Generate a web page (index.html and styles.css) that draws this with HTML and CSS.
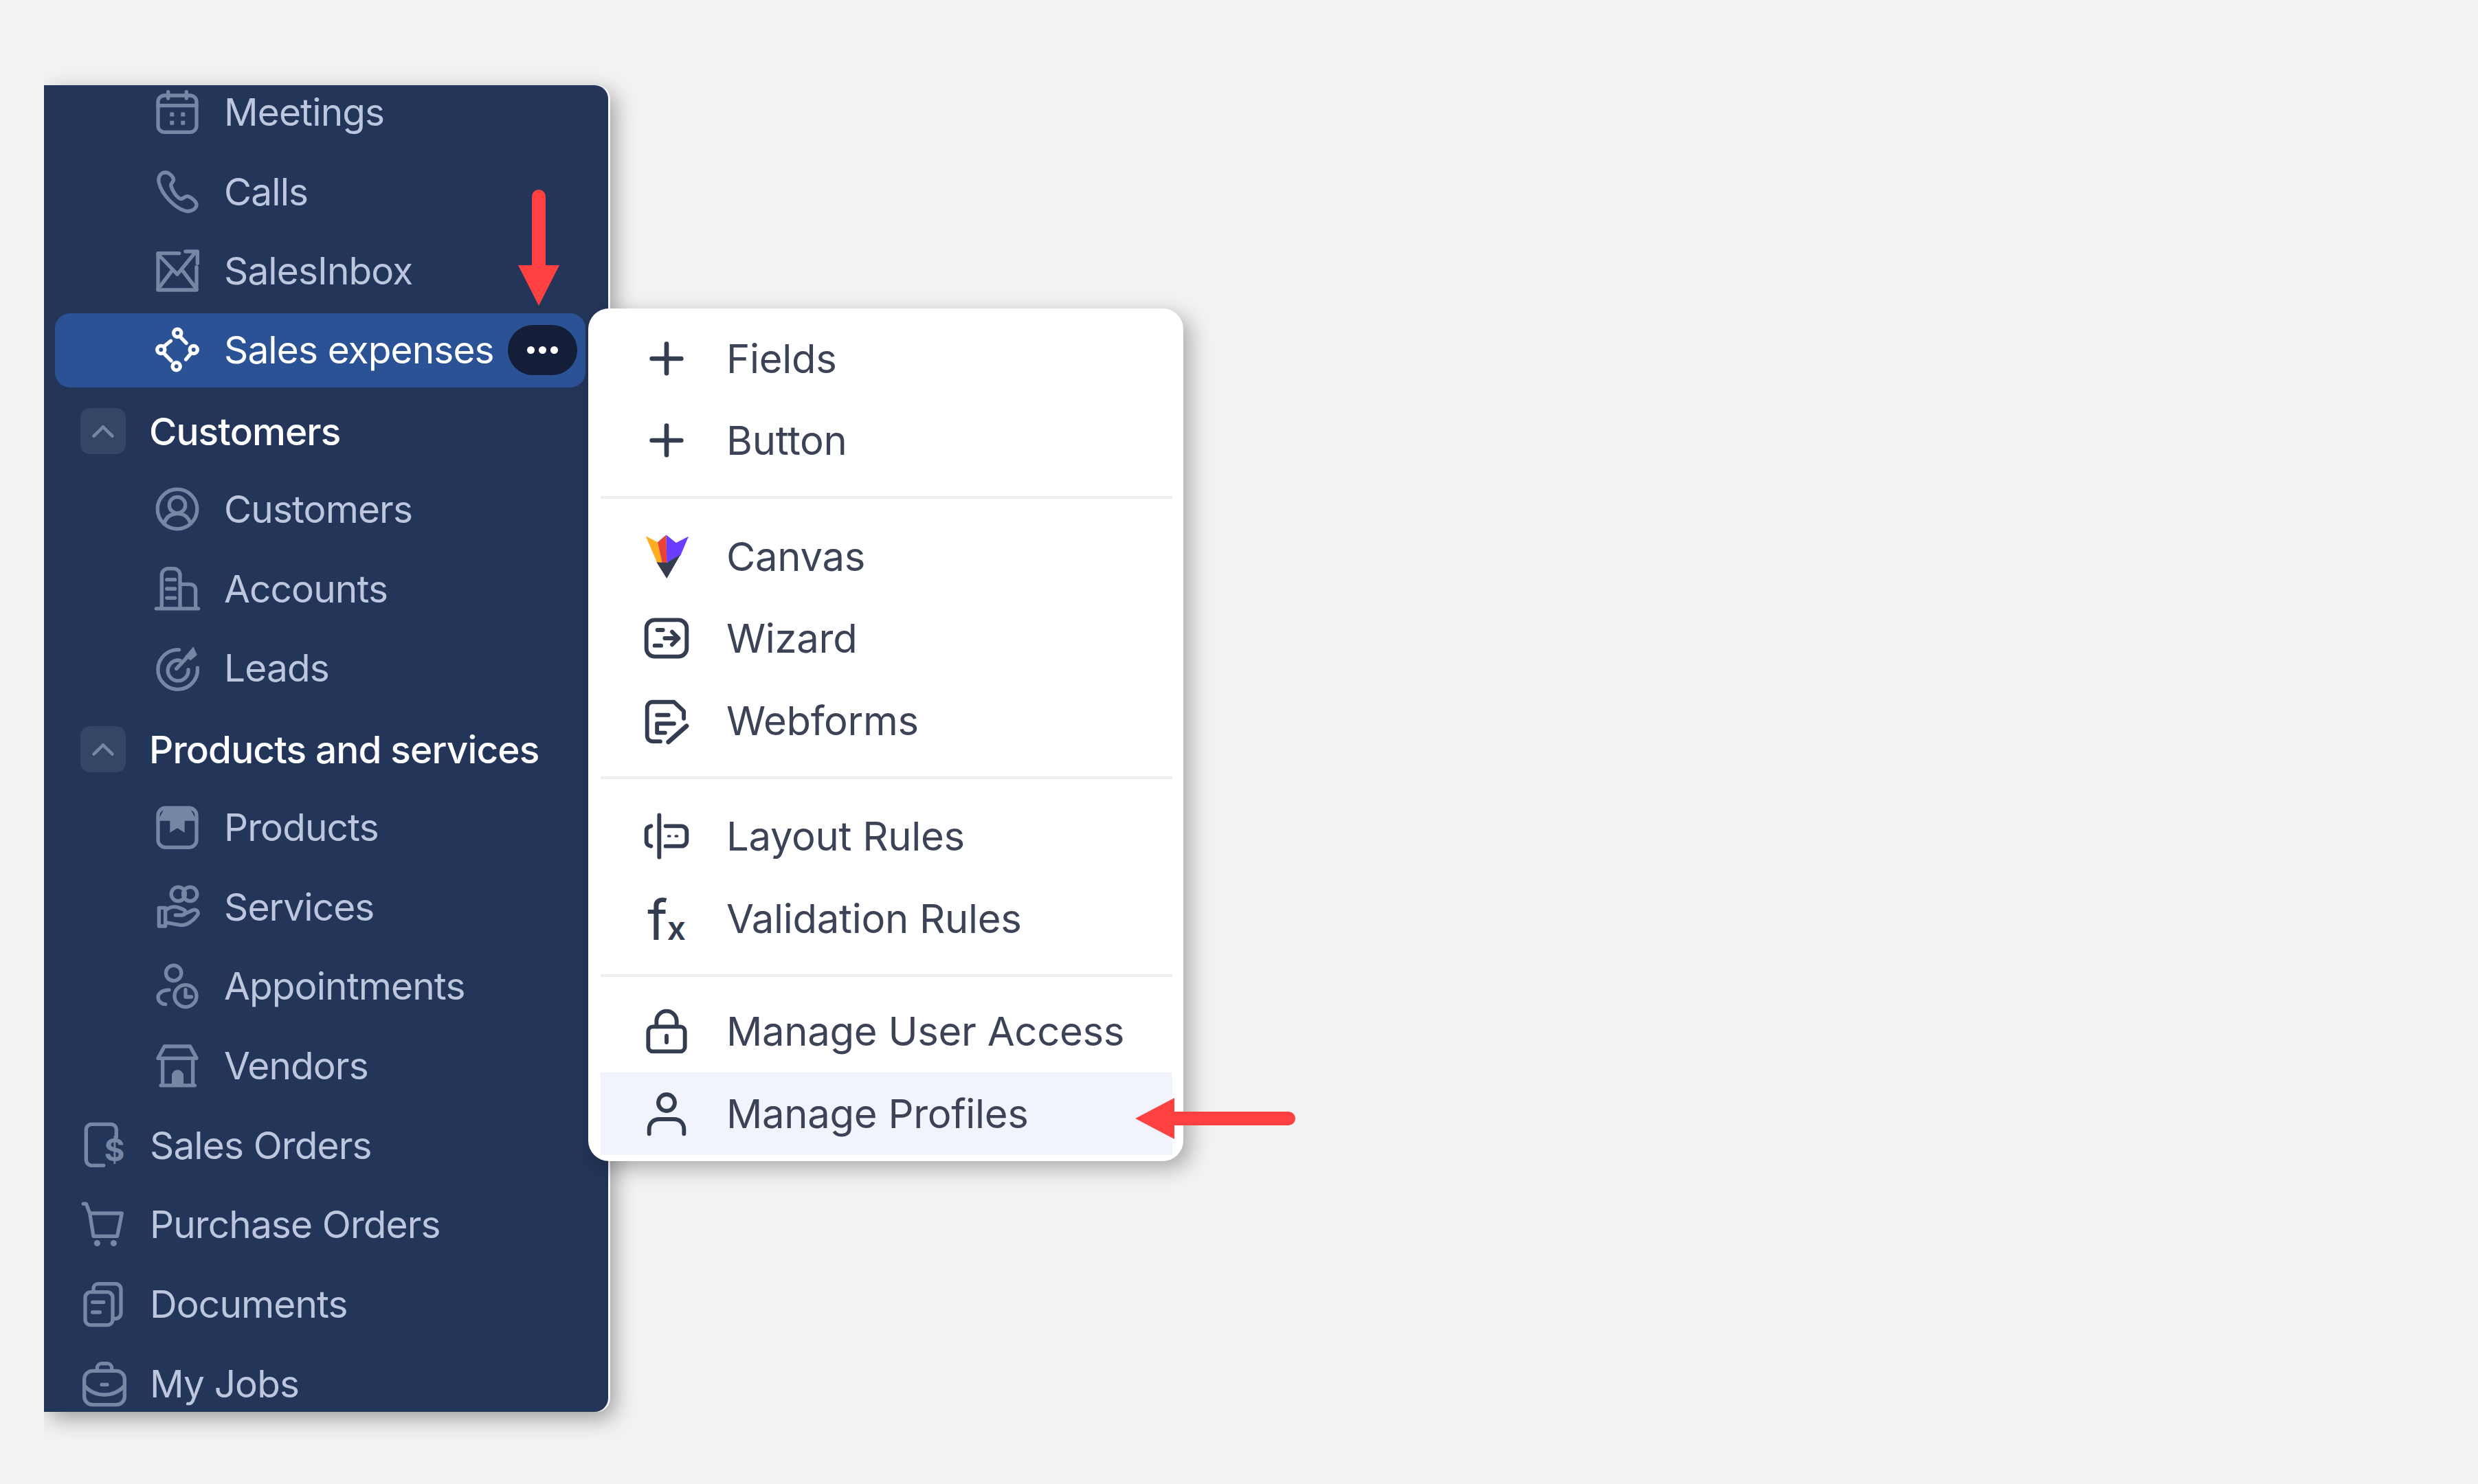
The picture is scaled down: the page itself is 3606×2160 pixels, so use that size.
FILE: index.html
```html
<!DOCTYPE html>
<html lang="en">
<head>
  <meta charset="UTF-8" />
  <title>Sales expenses menu</title>
  <link rel="stylesheet" href="styles.css">
</head>
<body>

<nav class="sidebar">
  <ul class="nav-list">
    <li class="nav-item sub">
      <svg class="icon" viewBox="0 0 24 24"><rect x="1.500" y="3" width="21" height="20" rx="3.500"/><path d="M1.500 8.500h21M7 1v3.500M17 1v3.500"/><path class="dots" d="M8 12.200h2.200v2.200H8zM14 12.200h2.200v2.200H14zM8 16.800h2.200v2.200H8zM14 16.800h2.200v2.200H14z"/></svg>
      <span>Meetings</span>
    </li>
    <li class="nav-item sub">
      <svg class="icon" viewBox="0 0 24 24"><path d="M5.500 1.500C3 1.500 1.200 4 2 7.200c1.500 6 8 13.500 14.500 15.300 3 .8 6-1.300 6-3.500 0-1.500-2.800-4-4.800-4.500-1.500-.3-2.500 1.500-3.700 1.500-2.600-.8-5-5.200-5.500-7.500 0-1.100 1.500-2 1.500-3 0-1.600-2.500-4-4.500-4z"/></svg>
      <span>Calls</span>
    </li>
    <li class="nav-item sub">
      <svg class="icon" viewBox="0 0 24 24"><path d="M13 2.500H1.500v20h21V10"/><path d="M1.500 3L12 14l9-11M1.500 22l8-10.500M22.500 22l-8-10.500M16.500 1.500h6.500V8"/></svg>
      <span>SalesInbox</span>
    </li>
    <li class="nav-item sub active">
      <svg class="icon" viewBox="0 0 24 24"><circle cx="12.100" cy="2.900" r="2.100"/><circle cx="3.100" cy="12" r="2.100"/><circle cx="20.900" cy="12" r="2.100"/><circle cx="11.500" cy="21.100" r="2.100"/><path d="M13.500 4.800l3.400 3.600M4.700 10.200l3.700-3M19.500 14l-2.800 3.300M4.700 14l3.900 4"/></svg>
      <span>Sales expenses</span>
      <button class="more"><i></i><i></i><i></i></button>
    </li>

    <li class="nav-item head">
      <span class="chevron"><svg viewBox="0 0 24 24"><path d="M5 15.500l7-7 7 7"/></svg></span>
      <span>Customers</span>
    </li>
    <li class="nav-item sub">
      <svg class="icon" viewBox="0 0 24 24"><circle cx="12" cy="12" r="10.800"/><circle cx="12" cy="9.800" r="4.400"/><path d="M4.800 20c1-3.500 3.500-5.500 7.200-5.500s6.200 2 7.200 5.500"/></svg>
      <span>Customers</span>
    </li>
    <li class="nav-item sub">
      <svg class="icon" viewBox="0 0 24 24"><path d="M.5 22.800h23M3.500 22.800V4.500a3.500 3.500 0 0 1 3.500-3.500h3a3.500 3.500 0 0 1 3.500 3.500v18.300M13.500 9.500h5.500a3 3 0 0 1 3 3v10.300M6.300 7h4.400M6.300 12h4.400M6.300 17h4.400"/></svg>
      <span>Accounts</span>
    </li>
    <li class="nav-item sub">
      <svg class="icon" viewBox="0 0 24 24"><path d="M13 2.200a10.800 10.800 0 1 0 10 9.800"/><path d="M13.500 8a5.600 5.600 0 1 0 4.500 5"/><path d="M11.500 12.500l7-7.500"/><path class="dots" d="M20.800 .5l2 4.500-3.500 3-3.300-2z"/></svg>
      <span>Leads</span>
    </li>

    <li class="nav-item head">
      <span class="chevron"><svg viewBox="0 0 24 24"><path d="M5 15.500l7-7 7 7"/></svg></span>
      <span>Products and services</span>
    </li>
    <li class="nav-item sub">
      <svg class="icon" viewBox="0 0 24 24"><rect x="1.500" y="1.500" width="21" height="21.500" rx="4"/><path d="M1.500 7.500h21"/><path class="dots" d="M8 7.500h8v7.500l-4-2.500-4 2.500zM5 1.500h14l3 6H2z"/></svg>
      <span>Products</span>
    </li>
    <li class="nav-item sub">
      <svg class="icon" viewBox="0 0 24 24"><circle cx="12.500" cy="5" r="3.800"/><circle cx="19" cy="5" r="3.800"/><path d="M2 12.500h3.500v10H2zM5.500 14c2.500-2.300 5-2.500 7.500-1.500l2.500 1c1.500.6 1 3-1 3H11"/><path d="M15.500 16l5-2.200c2-.8 3.500 1 2.500 2.600-2 3-5.500 5.600-9 5.600l-8.500-1.500"/></svg>
      <span>Services</span>
    </li>
    <li class="nav-item sub">
      <svg class="icon" viewBox="0 0 24 24"><circle cx="10" cy="5" r="4.200"/><path d="M7.500 14.200c-3.500 0-6 1.800-6 4s2 3.800 4 3.800"/><circle cx="16.500" cy="17.500" r="6"/><path d="M16.500 14v4h3.200"/></svg>
      <span>Appointments</span>
    </li>
    <li class="nav-item sub">
      <svg class="icon" viewBox="0 0 24 24"><path d="M5 1.500h14l3.500 6.500h-21zM4 8v14.800M20.500 8v14.800M3 22.800h18.500"/><path class="dots" d="M9 22.500v-5a3.200 3.200 0 0 1 6.400 0v5z"/></svg>
      <span>Vendors</span>
    </li>

    <li class="nav-item top">
      <svg class="icon" viewBox="0 0 24 24"><path d="M18.500 7.500V3.500a3 3 0 0 0-3-3H5a3 3 0 0 0-3 3V20a3 3 0 0 0 3 3h6.500"/><text class="glyph" x="17.500" y="20.500">$</text></svg>
      <span>Sales Orders</span>
    </li>
    <li class="nav-item top">
      <svg class="icon" viewBox="0 0 24 24"><path d="M.5 .8h1.500L4 6l2 12.500h13L21.500 6H4"/><circle class="dots" cx="8" cy="22.300" r="1.700"/><circle class="dots" cx="17" cy="22.300" r="1.700"/></svg>
      <span>Purchase Orders</span>
    </li>
    <li class="nav-item top">
      <svg class="icon" viewBox="0 0 24 24"><rect x="1.500" y="5.500" width="15" height="18" rx="3"/><path d="M6 5V3.500a2.500 2.500 0 0 1 2.500-2.500h9.500a3 3 0 0 1 3 3v13a3 3 0 0 1-3 3h-1.500M5.500 11h6M5.500 16.500h4"/></svg>
      <span>Documents</span>
    </li>
    <li class="nav-item top">
      <svg class="icon" viewBox="0 0 24 24"><path d="M8 5V3.500A2.500 2.500 0 0 1 10.500 1h3A2.500 2.500 0 0 1 16 3.500V5"/><rect x="1" y="5" width="22" height="18.500" rx="4.500"/><path d="M1 13c3 3.500 7 5 11 5s8-1.500 11-5M10.500 12.500h3"/></svg>
      <span>My Jobs</span>
    </li>
  </ul>
</nav>

<div class="popup">
  <div class="group">
    <div class="menu-item">
      <svg class="icon" viewBox="0 0 24 24"><path class="plus" d="M12 4v16M4 12h16"/></svg>
      <span>Fields</span>
    </div>
    <div class="menu-item">
      <svg class="icon" viewBox="0 0 24 24"><path class="plus" d="M12 4v16M4 12h16"/></svg>
      <span>Button</span>
    </div>
  </div>
  <div class="group">
    <div class="menu-item">
      <svg class="icon logo" viewBox="0 0 24 24">
        <path fill="#ffad21" d="M.6 .8l6.500 3.400 2.600 11.100H6.800z"/>
        <path fill="#ea4335" d="M7.100 4.200L11.800 .2l.3 15.200H9.600z"/>
        <path fill="#6a3dff" d="M11.800 .2l5.400 4.300L24 1l-4.400 10.400-7.500 4z"/>
        <path fill="#343c50" d="M6.500 15.100l5.600.3 7.500-4.400L12.100 24z"/>
      </svg>
      <span>Canvas</span>
    </div>
    <div class="menu-item">
      <svg class="icon" viewBox="0 0 24 24"><rect x="1" y="2" width="22" height="20" rx="4.500"/><path d="M7 7.500h3M5.500 16h3.500M11 12h7.500M15 8.500l3.500 3.500-3.500 3.500"/></svg>
      <span>Wizard</span>
    </div>
    <div class="menu-item">
      <svg class="icon" viewBox="0 0 24 24"><path d="M8.600 23.300H4.400a3 3 0 0 1-3-3V4.800a3 3 0 0 1 3-3h11.700l5.300 5v4M6.800 8.900H13M16.100 13.600H6.800v5h4.400"/><path class="plus" d="M13 23.600l9.900-8.700"/></svg>
      <span>Webforms</span>
    </div>
  </div>
  <div class="group">
    <div class="menu-item">
      <svg class="icon" viewBox="0 0 24 24"><path d="M8 .5v23M3.500 6.500C2 6.800 1 7.500 1 9v6c0 1.500 1 2.200 2.500 2.500M11.500 6.500H20a3 3 0 0 1 3 3v5a3 3 0 0 1-3 3h-8.500"/><path class="thin" d="M13 12h.8M17 12h.8"/></svg>
      <span>Layout Rules</span>
    </div>
    <div class="menu-item">
      <svg class="icon" viewBox="0 0 24 24"><text class="fx" x="1.500" y="23.600">f</text><text class="fx small" x="12.300" y="23.600">x</text></svg>
      <span>Validation Rules</span>
    </div>
  </div>
  <div class="group last">
    <div class="menu-item">
      <svg class="icon" viewBox="0 0 24 24"><rect x="2" y="9.500" width="20" height="13.500" rx="2.500"/><path d="M6.500 9.500V6.500a5.500 5.500 0 0 1 11 0v3M12 14.500v3.500"/></svg>
      <span>Manage User Access</span>
    </div>
    <div class="menu-item hover">
      <svg class="icon" viewBox="0 0 24 24"><circle cx="12" cy="6" r="4.500"/><path d="M2.500 23v-2.500c0-3.500 2.500-5.500 5.500-5.500h8c3 0 5.500 2 5.500 5.500V23"/></svg>
      <span>Manage Profiles</span>
    </div>
  </div>
</div>

<!-- red callout arrows -->
<div class="arrow down"></div>
<div class="arrow left"></div>

</body>
</html>
```

FILE: styles.css
```css
* { box-sizing: border-box; }

body {
  margin: 0;
  height: 2160px;
  padding: 124px 0 0 64px;
  position: relative;
  overflow: hidden;
  background: #f2f2f2;
  font-family: 'Inter', 'Liberation Sans', sans-serif;
}

.sidebar {
  width: 821px;
  height: 1931px;
  overflow: hidden;
  background: #233559;
  border-radius: 0 20px 20px 0;
  box-shadow: 3px 0 0 #f9f9f9, 10px 10px 30px rgba(0, 0, 0, 0.34);
  clip-path: inset(-60px -60px -60px 0);
}

.nav-list {
  list-style: none;
  margin: -19px 0 0;
  padding: 0;
}

.nav-item {
  height: 115.7px;
  display: flex;
  align-items: center;
  white-space: nowrap;
  font-size: 55px;
  letter-spacing: -0.9px;
  color: #bcc7de;
}

.icon {
  width: 64px;
  height: 64px;
  flex: none;
  fill: none;
  stroke: currentColor;
  stroke-width: 2;
  stroke-linecap: round;
  stroke-linejoin: round;
  overflow: visible;
}

.nav-item .icon {
  color: #7687a6;
}

.icon .dots {
  fill: currentColor;
  stroke: none;
}

.icon .glyph {
  fill: currentColor;
  stroke: none;
  font-family: 'Inter', sans-serif;
  font-size: 17px;
  font-weight: 700;
  letter-spacing: 0;
  text-anchor: middle;
}

.nav-item.sub {
  padding-left: 162px;
  gap: 36px;
}

.nav-item.top {
  padding-left: 56px;
  gap: 34px;
}

.nav-item.head {
  padding: 5px 0 0 53px;
  gap: 34px;
  color: #fff;
  font-weight: 500;
}

.nav-item.active {
  width: 772px;
  margin-left: 16px;
  height: 108px;
  margin-top: 4px;
  margin-bottom: 3.5px;
  padding-left: 146px;
  padding-bottom: 2px;
  background: #2a5295;
  border-radius: 22px;
  color: #fff;
}

.nav-item.active .icon {
  color: #fff;
}

.more {
  flex: none;
  margin-left: -16px;
  width: 101px;
  height: 73px;
  display: flex;
  align-items: center;
  justify-content: center;
  gap: 6px;
  padding: 0;
  border: none;
  border-radius: 37px;
  background: #141e38;
}

.more i {
  width: 11px;
  height: 11px;
  border-radius: 50%;
  background: #fff;
}

.chevron {
  width: 66px;
  height: 67px;
  flex: none;
  display: flex;
  align-items: center;
  justify-content: center;
  border-radius: 14px;
  background: #344666;
}

.chevron svg {
  width: 46px;
  height: 46px;
  fill: none;
  stroke: #7687a6;
  stroke-width: 2.4;
  stroke-linecap: round;
  stroke-linejoin: round;
}

.popup {
  position: absolute;
  top: 449px;
  left: 856px;
  width: 866px;
  height: 1241px;
  padding: 13px 16px 8px 18px;
  background: #fff;
  border-radius: 30px;
  box-shadow: 10px 10px 30px rgba(0, 0, 0, 0.3);
}

.group {
  padding-bottom: 21px;
  margin-bottom: 24px;
  border-bottom: 4px solid #eeeeee;
}

.group.last {
  padding-bottom: 0;
  margin-bottom: 0;
  margin-top: -4px;
  border-bottom: none;
}

.menu-item {
  height: 119.5px;
  display: flex;
  align-items: center;
  gap: 55px;
  padding-left: 64px;
  font-size: 58px;
  letter-spacing: -0.3px;
  color: #3c4356;
}

.menu-item .icon {
  color: #343c50;
  stroke-width: 2.2;
}

.menu-item .icon.logo {
  stroke: none;
}

.menu-item .icon .plus {
  stroke-width: 2.5;
}

.menu-item .icon .thin {
  stroke-width: 1.4;
}

.menu-item .icon .fx {
  fill: currentColor;
  stroke: none;
  font-family: 'Inter', sans-serif;
  font-size: 30px;
  font-weight: 400;
  letter-spacing: 0;
}

.menu-item .icon .fx.small {
  font-size: 18px;
  font-weight: 600;
}

.menu-item.hover {
  background: #f1f4fd;
}

.arrow {
  position: absolute;
  background: #ff4040;
  border-radius: 10px;
}

.arrow::after {
  content: "";
  position: absolute;
  width: 0;
  height: 0;
}

.arrow.down {
  left: 774px;
  top: 276px;
  width: 20px;
  height: 120px;
}

.arrow.down::after {
  left: -20px;
  top: 110px;
  border-left: 30px solid transparent;
  border-right: 30px solid transparent;
  border-top: 59px solid #ff4040;
}

.arrow.left {
  left: 1700px;
  top: 1618px;
  width: 185px;
  height: 20px;
}

.arrow.left::after {
  left: -48px;
  top: -20px;
  border-top: 30px solid transparent;
  border-bottom: 30px solid transparent;
  border-right: 57px solid #ff4040;
}
```
